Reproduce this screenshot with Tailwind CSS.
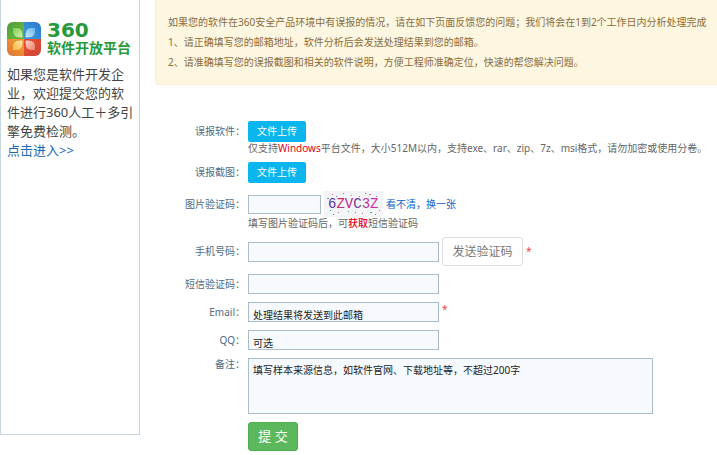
<!DOCTYPE html>
<html lang="zh-CN">

<head>
    <meta charset="UTF-8">
    <meta name="viewport" content="width=device-width, initial-scale=1.0">
    <title>误报反馈 - 360软件开放平台</title>
    <script src="https://cdn.jsdelivr.net/npm/@tailwindcss/browser@4"></script>
</head>

<body class="bg-white font-['Noto_Sans','Noto_Sans_CJK_SC',sans-serif] text-[10px] text-[#666] overflow-x-hidden">
    <div class="flex items-start">
        <aside class="w-[140px] shrink-0 min-h-[435px] border border-t-0 border-[#c8d8e2] pt-5 pl-[6px]">
            <div class="flex items-end gap-[6px]">
                <svg class="w-[34px] h-[34px] shrink-0" viewBox="0 0 34 34" aria-hidden="true">
                    <defs>
                        <clipPath id="tile"><rect width="34" height="34" rx="6" /></clipPath>
                        <linearGradient id="g1" x1="0" y1="0" x2="1" y2="1"><stop offset="0" stop-color="#4f9a3c" /><stop offset="1" stop-color="#6fbf3a" /></linearGradient>
                        <linearGradient id="g2" x1="1" y1="0" x2="0" y2="1"><stop offset="0" stop-color="#2a78c8" /><stop offset="1" stop-color="#3f9fe6" /></linearGradient>
                        <linearGradient id="g3" x1="0" y1="1" x2="1" y2="0"><stop offset="0" stop-color="#d9773a" /><stop offset="1" stop-color="#f7a02c" /></linearGradient>
                        <linearGradient id="g4" x1="1" y1="1" x2="0" y2="0"><stop offset="0" stop-color="#c9463a" /><stop offset="1" stop-color="#ee5030" /></linearGradient>
                        <linearGradient id="p1" x1="0" y1="0" x2="1" y2="1"><stop offset="0" stop-color="#7cc850" /><stop offset="1" stop-color="#d8f2b0" /></linearGradient>
                        <linearGradient id="p2" x1="1" y1="0" x2="0" y2="1"><stop offset="0" stop-color="#5fb2f0" /><stop offset="1" stop-color="#d4effc" /></linearGradient>
                        <linearGradient id="p3" x1="0" y1="1" x2="1" y2="0"><stop offset="0" stop-color="#fbb040" /><stop offset="1" stop-color="#fdf0b0" /></linearGradient>
                        <linearGradient id="p4" x1="1" y1="1" x2="0" y2="0"><stop offset="0" stop-color="#f07a62" /><stop offset="1" stop-color="#fbd8c8" /></linearGradient>
                    </defs>
                    <g clip-path="url(#tile)">
                        <rect width="17" height="17" fill="url(#g1)" />
                        <rect x="17" width="17" height="17" fill="url(#g2)" />
                        <rect y="17" width="17" height="17" fill="url(#g3)" />
                        <rect x="17" y="17" width="17" height="17" fill="url(#g4)" />
                    </g>
                    <path d="M16 16H12Q6 15.5 5.5 10V5.5H10Q15.5 6 16 12Z" fill="url(#p1)" stroke="#55a83a" />
                    <path d="M18 16H22Q28 15.5 28.5 10V5.5H24Q18.5 6 18 12Z" fill="url(#p2)" stroke="#2f86d0" />
                    <path d="M16 18H12Q6 18.5 5.5 24V28.5H10Q15.5 28 16 22Z" fill="url(#p3)" stroke="#ea8428" />
                    <path d="M18 18H22Q28 18.5 28.5 24V28.5H24Q18.5 28 18 22Z" fill="url(#p4)" stroke="#d64430" />
                </svg>
                <div class="text-[#27993a] font-bold whitespace-nowrap">
                    <div class="font-['DejaVu_Sans',sans-serif] text-[20px] leading-[20px]">360</div>
                    <div class="text-[14px] leading-[16px]">软件开放平台</div>
                </div>
            </div>
            <p class="mt-[9px] text-[13px] leading-[19px] text-[#444] whitespace-nowrap">
                如果您是软件开发企<br>业，欢迎提交您的软<br>件进行360人工＋多引<br>擎免费检测。<br>
                <a href="#" class="text-[#1a68b8]">点击进入&gt;&gt;</a>
            </p>
        </aside>

        <main class="flex-1 min-w-0 ml-[15px]">
            <div class="bg-[#fdf6e1] border border-t-0 border-r-0 border-[#faeed3] rounded-bl-sm pt-3 pb-3 pl-3 leading-[20px] text-[#8a6d3b] whitespace-nowrap overflow-hidden">
                <p>如果您的软件在360安全产品环境中有误报的情况，请在如下页面反馈您的问题；我们将会在1到2个工作日内分析处理完成</p>
                <p>1、请正确填写您的邮箱地址，软件分析后会发送处理结果到您的邮箱。</p>
                <p>2、请准确填写您的误报截图和相关的软件说明，方便工程师准确定位，快速的帮您解决问题。</p>
            </div>

            <form class="mt-9 flex flex-col gap-2 whitespace-nowrap">
                <div>
                    <div class="flex items-center gap-[3px]">
                        <label for="sample" class="w-[90px] text-right text-[#4f6b85]">误报软件：</label>
                        <button type="button" id="sample" class="w-[58px] h-[21px] rounded-xs bg-[#0bb5ee] text-white">文件上传</button>
                    </div>
                    <p class="pl-[93px] leading-[12px]">仅支持<span class="text-[#e60012]">Windows</span>平台文件，大小512M以内，支持exe、rar、zip、7z、msi格式，请勿加密或使用分卷。</p>
                </div>

                <div class="flex items-center gap-[3px]">
                    <label for="shot" class="w-[90px] text-right text-[#4f6b85]">误报截图：</label>
                    <button type="button" id="shot" class="w-[58px] h-[21px] rounded-xs bg-[#0bb5ee] text-white">文件上传</button>
                </div>

                <div>
                    <div class="flex items-center gap-[3px]">
                        <label for="captcha" class="w-[90px] text-right text-[#4f6b85]">图片验证码：</label>
                        <input type="text" id="captcha" class="w-[73px] h-[19px] px-1 border border-[#a9bcc8] bg-[#f6fafe]">
                        <svg class="w-[59px] h-[26px]" viewBox="0 0 59 26" role="img" aria-label="验证码">
                            <rect width="59" height="26" fill="#f3f4f6" />
                            <g fill="#e06a8c">
                                <rect x="8" y="3" width="1" height="1" /><rect x="27" y="4" width="1" height="1" /><rect x="45" y="3" width="2" height="1" />
                                <rect x="14" y="21" width="1" height="1" /><rect x="38" y="22" width="1" height="1" /><rect x="55" y="19" width="1" height="1" />
                            </g>
                            <g fill="#4fae86">
                                <rect x="3" y="7" width="2" height="1" /><rect x="19" y="2" width="1" height="1" /><rect x="35" y="5" width="1" height="1" />
                                <rect x="24" y="20" width="1" height="1" /><rect x="46" y="21" width="2" height="1" /><rect x="6" y="19" width="1" height="1" />
                            </g>
                            <g fill="#6b6fc9">
                                <rect x="12" y="5" width="1" height="1" /><rect x="41" y="2" width="1" height="1" /><rect x="52" y="5" width="1" height="1" />
                                <rect x="9" y="23" width="1" height="1" /><rect x="31" y="21" width="1" height="1" /><rect x="51" y="23" width="1" height="1" />
                            </g>
                            <text x="4" y="17" class="font-['Liberation_Mono',monospace] text-[14px]"><tspan fill="#5a35a8">6</tspan><tspan fill="#c92f6c">Z</tspan><tspan fill="#c0268c">V</tspan><tspan fill="#6f3a9c">C</tspan><tspan fill="#b03a9a">3</tspan><tspan fill="#d42bb0">Z</tspan></text>
                        </svg>
                        <a href="#" class="text-[#0a62c9]">看不清，换一张</a>
                    </div>
                    <p class="pl-[93px] leading-[12px]">填写图片验证码后，可<span class="text-[#e60012] font-medium">获取</span>短信验证码</p>
                </div>

                <div class="flex items-center gap-[3px]">
                    <label for="phone" class="w-[90px] text-right text-[#4f6b85]">手机号码：</label>
                    <input type="tel" id="phone" class="w-[191px] h-5 px-1 border border-[#a9bcc8] bg-[#f6fafe]">
                    <button type="button" class="w-[81px] h-[29px] rounded-[3px] border border-[#ddd] bg-white text-[12px] text-[#777]">发送验证码</button>
                    <span class="text-[#f0444c]">*</span>
                </div>

                <div class="flex items-center gap-[3px]">
                    <label for="sms" class="w-[90px] text-right text-[#4f6b85]">短信验证码：</label>
                    <input type="text" id="sms" class="w-[191px] h-5 px-1 border border-[#a9bcc8] bg-[#f6fafe]">
                </div>

                <div class="flex items-center gap-[3px]">
                    <label for="email" class="w-[90px] text-right text-[#4f6b85]">Email：</label>
                    <input type="text" id="email" value="处理结果将发送到此邮箱" class="w-[191px] h-5 px-1 pt-1 border border-[#a9bcc8] bg-[#f6fafe] text-[#222]">
                    <span class="self-start text-[#f0444c]">*</span>
                </div>

                <div class="flex items-center gap-[3px]">
                    <label for="qq" class="w-[90px] text-right text-[#4f6b85]">QQ：</label>
                    <input type="text" id="qq" value="可选" class="w-[191px] h-5 px-1 pt-1 border border-[#a9bcc8] bg-[#f6fafe] text-[#222]">
                </div>

                <div class="flex items-start gap-[3px]">
                    <label for="remark" class="w-[90px] shrink-0 leading-[12px] text-right text-[#4f6b85]">备注：</label>
                    <textarea id="remark" class="flex-1 max-w-[405px] h-14 px-1 py-1 border border-[#a9bcc8] bg-[#f6fafe] text-[#222] resize-none">填写样本来源信息，如软件官网、下载地址等，不超过200字</textarea>
                </div>

                <div class="pl-[93px]">
                    <button type="submit" class="w-[50px] h-[29px] rounded-[3px] border border-[#4cae4c] bg-[#5cb85c] text-[13px] text-white">提 交</button>
                </div>
            </form>
        </main>
    </div>
</body>

</html>
